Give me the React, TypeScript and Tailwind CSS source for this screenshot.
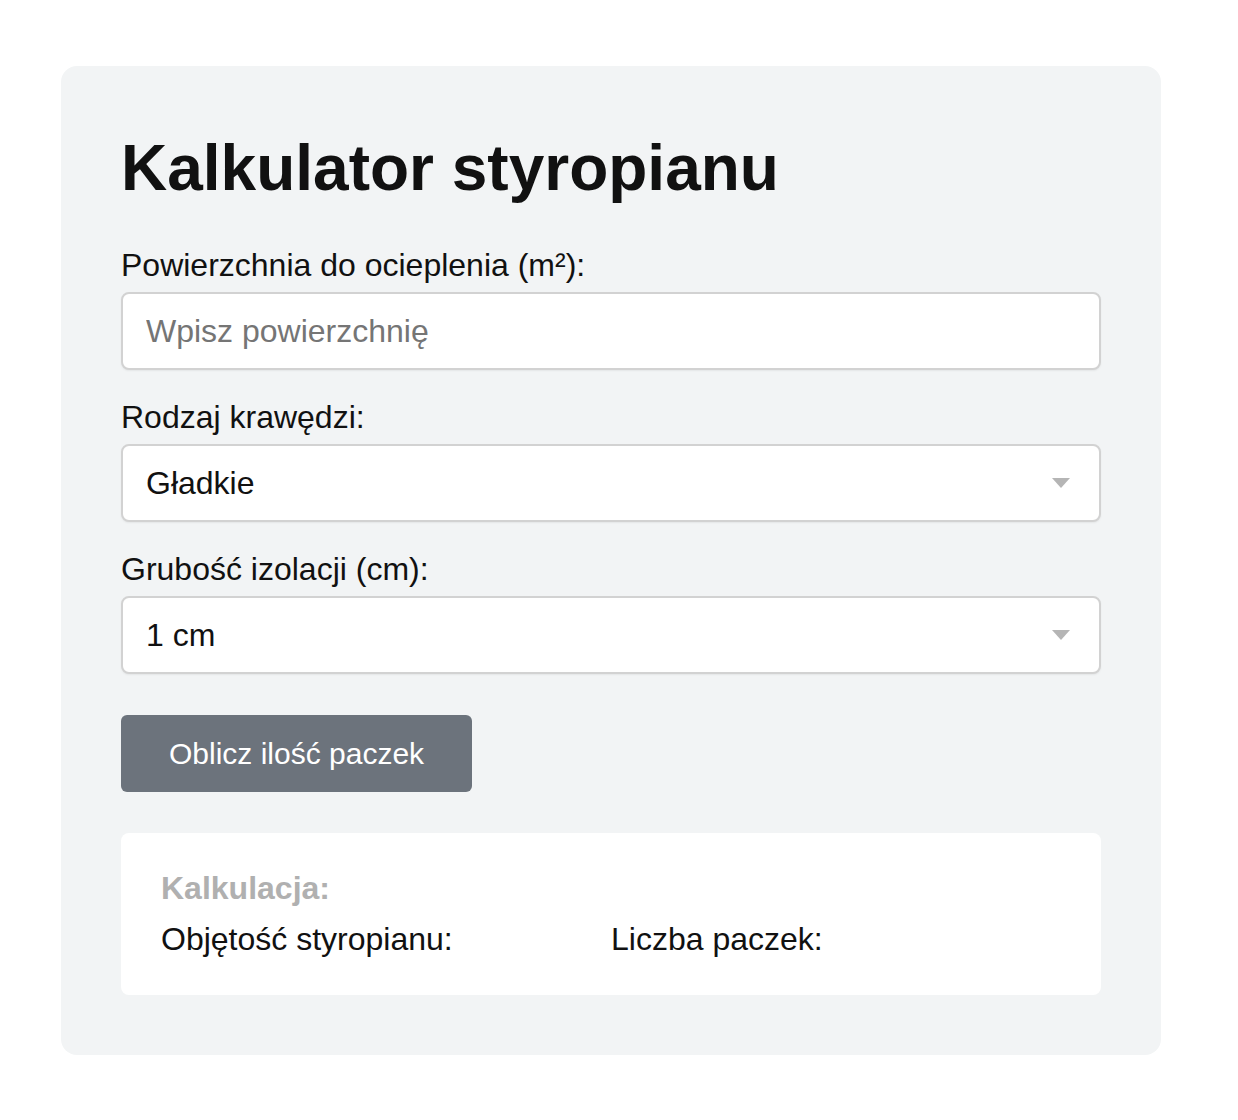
import React from "react";

function Arrow() {
  return (
    <svg
      className="pointer-events-none absolute right-[31px] top-1/2 -translate-y-1/2"
      width="18"
      height="10"
      viewBox="0 0 18 10"
    >
      <path d="M0 0 H18 L9 10 Z" fill="#b5b5b5" />
    </svg>
  );
}

export default function App() {
  const fieldCls =
    "block w-full h-[78px] rounded-[8px] border-2 border-[#d2d2d2] bg-white px-[23px] text-[32px] leading-[38px] text-[#111] shadow-[0_1px_2px_rgba(0,0,0,0.06)] outline-none";
  return (
    <div
      className="min-h-[1120px] bg-white pt-[66px] pl-[61px]"
      style={{ fontFamily: '"Liberation Sans", Arial, Helvetica, sans-serif' }}
    >
      <div className="w-[1100px] rounded-[16px] bg-[#f2f4f5] p-[60px] text-[#111]">
        <h1 className="mb-[36px] text-[64px] font-bold leading-[84px]">
          Kalkulator styropianu
        </h1>

        <label className="mb-2 block text-[32px] leading-[38px]">
          Powierzchnia do ocieplenia (m²):
        </label>
        <input
          type="text"
          placeholder="Wpisz powierzchnię"
          className={fieldCls + " placeholder:text-[#757575]"}
        />

        <label className="mb-2 mt-[28px] block text-[32px] leading-[38px]">
          Rodzaj krawędzi:
        </label>
        <div className="relative">
          <select className={fieldCls + " appearance-none"} defaultValue="gladkie">
            <option value="gladkie">Gładkie</option>
            <option value="frezowane">Frezowane</option>
          </select>
          <Arrow />
        </div>

        <label className="mb-2 mt-[28px] block text-[32px] leading-[38px]">
          Grubość izolacji (cm):
        </label>
        <div className="relative">
          <select className={fieldCls + " appearance-none"} defaultValue="1">
            <option value="1">1 cm</option>
            <option value="2">2 cm</option>
            <option value="3">3 cm</option>
          </select>
          <Arrow />
        </div>

        <button className="mt-[41px] flex h-[77px] items-center rounded-[6px] bg-[#6c737c] px-[48px] text-[30px] leading-[36px] text-white">
          Oblicz ilość paczek
        </button>

        <div className="mt-[41px] rounded-[8px] bg-white px-[40px] pb-[37px] pt-[36px]">
          <h3 className="mb-[13px] text-[32px] font-bold leading-[38px] text-[#b0b0b0]">
            Kalkulacja:
          </h3>
          <div className="grid grid-cols-2 text-[32px] leading-[38px]">
            <div>Objętość styropianu:</div>
            <div>Liczba paczek:</div>
          </div>
        </div>
      </div>
    </div>
  );
}
